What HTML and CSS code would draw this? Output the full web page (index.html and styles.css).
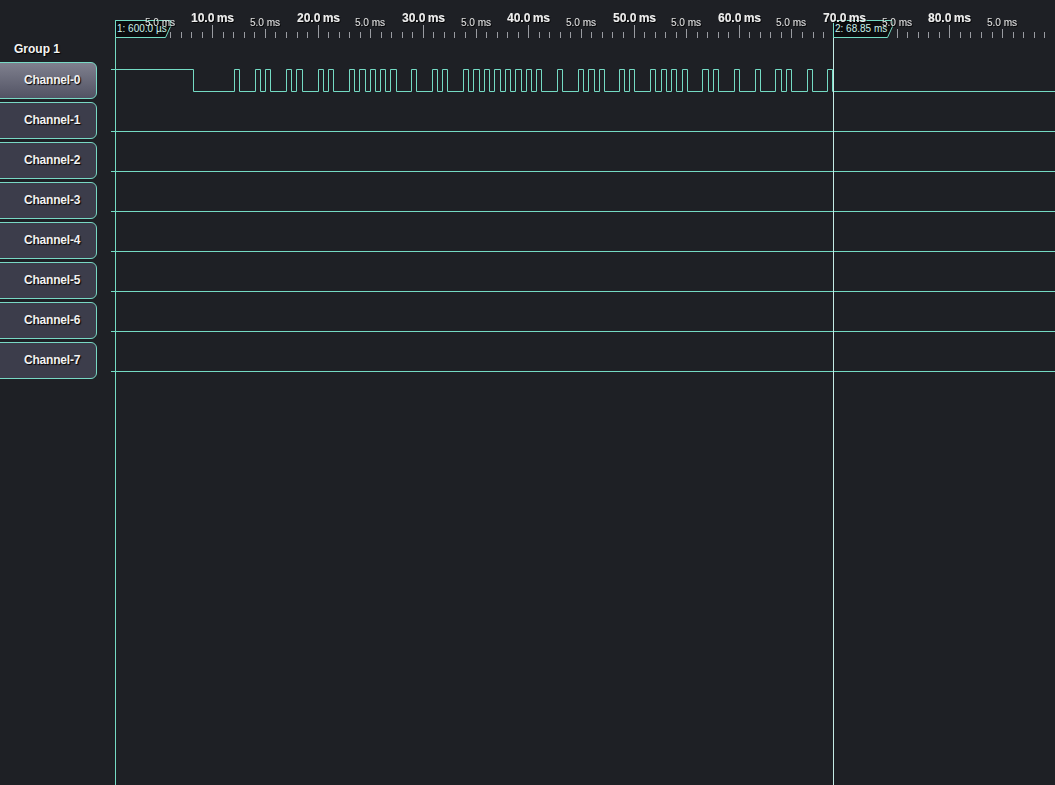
FILE: index.html
```html
<!DOCTYPE html>
<html>
<head>
<meta charset="utf-8">
<link rel="stylesheet" href="styles.css">
</head>
<body>
<div class="app">
  <aside class="sidebar">
    <div class="group-title">Group 1</div>
    <ul class="channels">
      <li class="chan selected">Channel-0</li>
      <li class="chan">Channel-1</li>
      <li class="chan">Channel-2</li>
      <li class="chan">Channel-3</li>
      <li class="chan">Channel-4</li>
      <li class="chan">Channel-5</li>
      <li class="chan">Channel-6</li>
      <li class="chan">Channel-7</li>
    </ul>
  </aside>
  <svg class="plot" width="944" height="785" viewBox="111 0 944 785" xmlns="http://www.w3.org/2000/svg">
    <defs>
      <filter id="sh" x="-10%" y="-30%" width="130%" height="170%">
        <feDropShadow dx="1" dy="1" stdDeviation="0.6" flood-color="#000" flood-opacity="0.9"/>
      </filter>
    </defs>
    <!-- ruler ticks -->
    <path class="tick" d="M118.5 32V38M128.5 32V38M139.5 32V38M149.5 32V38M170.5 32V38M181.5 32V38M191.5 32V38M202.5 32V38M223.5 32V38M233.5 32V38M244.5 32V38M254.5 32V38M275.5 32V38M286.5 32V38M297.5 32V38M307.5 32V38M328.5 32V38M339.5 32V38M349.5 32V38M360.5 32V38M381.5 32V38M391.5 32V38M402.5 32V38M412.5 32V38M433.5 32V38M444.5 32V38M454.5 32V38M465.5 32V38M486.5 32V38M497.5 32V38M507.5 32V38M518.5 32V38M539.5 32V38M549.5 32V38M560.5 32V38M570.5 32V38M591.5 32V38M602.5 32V38M612.5 32V38M623.5 32V38M644.5 32V38M655.5 32V38M665.5 32V38M676.5 32V38M697.5 32V38M707.5 32V38M718.5 32V38M728.5 32V38M749.5 32V38M760.5 32V38M770.5 32V38M781.5 32V38M802.5 32V38M813.5 32V38M823.5 32V38M834.5 32V38M855.5 32V38M865.5 32V38M876.5 32V38M886.5 32V38M907.5 32V38M918.5 32V38M928.5 32V38M939.5 32V38M960.5 32V38M970.5 32V38M981.5 32V38M992.5 32V38M1013.5 32V38M1023.5 32V38M1034.5 32V38M1044.5 32V38"/>
    <path class="tick" d="M160.5 29V38M265.5 29V38M370.5 29V38M476.5 29V38M581.5 29V38M686.5 29V38M791.5 29V38M897.5 29V38M1002.5 29V38"/>
    <path class="tick" d="M212.5 25V38M318.5 25V38M423.5 25V38M528.5 25V38M634.5 25V38M739.5 25V38M844.5 25V38M949.5 25V38"/>

    <!-- channel baselines -->
    <path class="trace" d="M111 131.5H1055M111 171.5H1055M111 211.5H1055M111 251.5H1055M111 291.5H1055M111 331.5H1055M111 371.5H1055"/>

    <!-- channel 0 waveform -->
    <path class="trace" d="M111 69.5H193.5V91.5H234.5V69.5H239.5V91.5H255.5V69.5H260.5V91.5H265.5V69.5H270.5V91.5H286.5V69.5H291.5V91.5H296.5V69.5H302.5V91.5H318.5V69.5H323.5V91.5H328.5V69.5H333.5V91.5H349.5V69.5H354.5V91.5H359.5V69.5H365.5V91.5H370.5V69.5H375.5V91.5H380.5V69.5H385.5V91.5H390.5V69.5H396.5V91.5H411.5V69.5H416.5V91.5H432.5V69.5H437.5V91.5H442.5V69.5H447.5V91.5H463.5V69.5H468.5V91.5H473.5V69.5H479.5V91.5H484.5V69.5H489.5V91.5H494.5V69.5H500.5V91.5H505.5V69.5H510.5V91.5H515.5V69.5H521.5V91.5H526.5V69.5H531.5V91.5H536.5V69.5H541.5V91.5H557.5V69.5H562.5V91.5H578.5V69.5H583.5V91.5H588.5V69.5H594.5V91.5H599.5V69.5H604.5V91.5H619.5V69.5H624.5V91.5H629.5V69.5H634.5V91.5H650.5V69.5H655.5V91.5H661.5V69.5H666.5V91.5H671.5V69.5H676.5V91.5H682.5V69.5H687.5V91.5H702.5V69.5H708.5V91.5H713.5V69.5H718.5V91.5H734.5V69.5H739.5V91.5H755.5V69.5H760.5V91.5H775.5V69.5H781.5V91.5H786.5V69.5H791.5V91.5H807.5V69.5H812.5V91.5H827.5V69.5H832.5V91.5H1055"/>

    <!-- cursors -->
    <path class="cursor1" d="M115.5 20V785"/>
    <path class="cursor2" d="M833.5 20V785"/>
    <path class="cbox" d="M115.5 20.5H170.5V26.5L165.5 37.5H115.5Z"/>
    <path class="cbox" d="M833.5 20.5H892.5V26.5L887.5 37.5H833.5Z"/>

    <!-- ruler labels -->
    <g class="minor" filter="url(#sh)">
      <text x="160" y="26">5.0 ms</text>
      <text x="265" y="26">5.0 ms</text>
      <text x="370" y="26">5.0 ms</text>
      <text x="476" y="26">5.0 ms</text>
      <text x="581" y="26">5.0 ms</text>
      <text x="686" y="26">5.0 ms</text>
      <text x="791" y="26">5.0 ms</text>
      <text x="897" y="26">5.0 ms</text>
      <text x="1002" y="26">5.0 ms</text>
    </g>
    <g class="major" filter="url(#sh)">
      <text x="212.5" y="22">10.0 ms</text>
      <text x="318.5" y="22">20.0 ms</text>
      <text x="423.5" y="22">30.0 ms</text>
      <text x="528.5" y="22">40.0 ms</text>
      <text x="634.5" y="22">50.0 ms</text>
      <text x="739.5" y="22">60.0 ms</text>
      <text x="844.5" y="22">70.0 ms</text>
      <text x="949.5" y="22">80.0 ms</text>
    </g>
    <text class="ctext" x="117" y="32">1: 600.0 µs</text>
    <text class="ctext" x="835" y="32">2: 68.85 ms</text>
  </svg>
</div>
</body>
</html>
```

FILE: styles.css
```css
html, body {
  margin: 0;
  padding: 0;
  background: #1e2025;
  overflow: hidden;
}

.app {
  display: flex;
  width: 1055px;
  height: 785px;
  font-family: "Liberation Sans", Arial, sans-serif;
}

.sidebar {
  flex: 0 0 111px;
  width: 111px;
  padding-top: 43px;
  box-sizing: border-box;
  overflow: hidden;
}

.group-title {
  height: 13px;
  line-height: 13px;
  margin: 0 0 6px 14px;
  font-size: 12px;
  font-weight: bold;
  color: #f4f4f4;
  text-shadow: 1px 1px 1px #000;
}

.channels {
  list-style: none;
  margin: 0 0 0 -8px;
  padding: 0;
  display: flex;
  flex-direction: column;
  gap: 3px;
}

.chan {
  width: 105px;
  height: 37px;
  box-sizing: border-box;
  border: 1px solid #78d8c4;
  border-radius: 6px;
  background: #3c3d4b;
  padding-left: 31px;
  font-size: 12px;
  font-weight: bold;
  letter-spacing: -0.2px;
  line-height: 35px;
  color: #f2f2f2;
  text-shadow: 1px 1px 1px #000;
}

.chan.selected {
  background: linear-gradient(to bottom, #7f808e, #525364);
}

.plot {
  display: block;
  flex: 0 0 944px;
}

.tick {
  stroke: #9a9ca2;
  stroke-width: 1;
  fill: none;
}

.trace {
  stroke: #74dbc4;
  stroke-width: 1;
  fill: none;
}

.cursor1 {
  stroke: #74dbc4;
  stroke-width: 1;
}

.cursor2 {
  stroke: #c4ebe5;
  stroke-width: 1;
}

.cbox {
  fill: #0b0c0e;
  stroke: #74dbc4;
  stroke-width: 1;
}

.minor text {
  font-family: "Liberation Sans", Arial, sans-serif;
  font-size: 10px;
  fill: #dcdcdc;
  text-anchor: middle;
}

.major text {
  font-family: "Liberation Sans", Arial, sans-serif;
  font-size: 12px;
  font-weight: bold;
  fill: #ececec;
  text-anchor: middle;
  word-spacing: -1px;
}

.ctext {
  font-family: "Liberation Sans", Arial, sans-serif;
  font-size: 10px;
  fill: #c9f1ea;
}
```
